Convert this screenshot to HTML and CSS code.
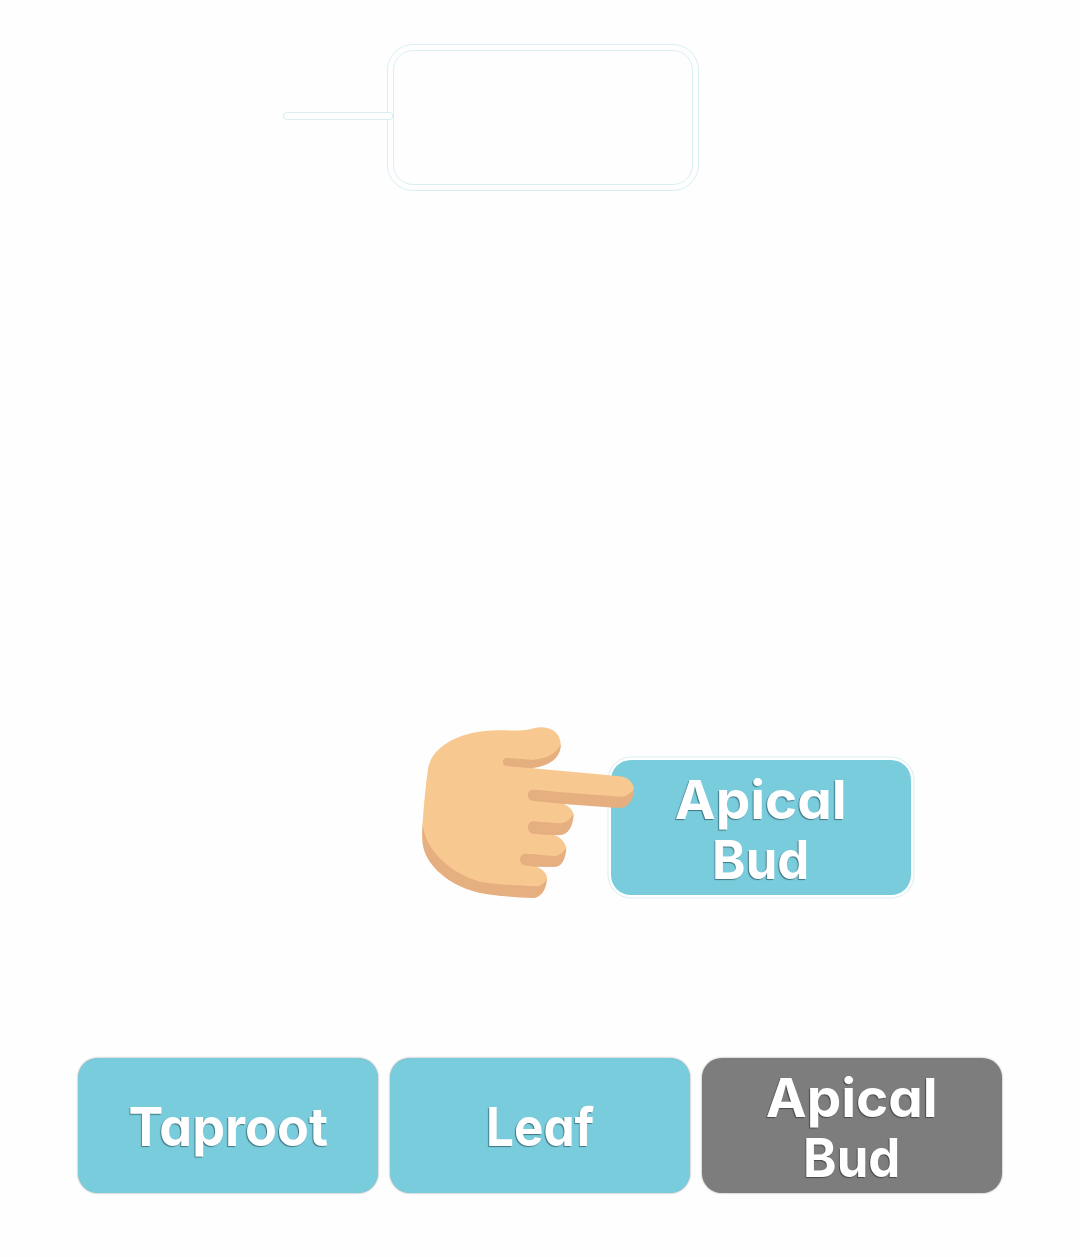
FILE: index.html
```html
<!DOCTYPE html>
<html lang="en">
<head>
<meta charset="utf-8">
<title>Plant parts</title>
<link rel="stylesheet" href="styles.css">
</head>
<body>
<main class="board">
  <section class="target">
    <div class="connector"></div>
    <div class="drop-frame"><div class="drop-slot"></div></div>
  </section>
  <section class="drag">
    <div class="card drag-card"><span class="label apical">Apical</span><span class="label bud">Bud</span></div>
    <svg class="hand" viewBox="0 0 720 585" aria-hidden="true">
      <path fill="#e6af80" d="M38 325C35 350 35 385 43 408C62 465 132 517 207 533C247 541 312 547 368 549C390 550 411 525 411 488L380 455L429 456C453 457 466 437 469 401L431 361L452 360C474 359 490 334 491 297L460 267L624 279C650 281 672 260 672 222L618 220L360 158C405 156 448 133 452 90L440 80L270 130L70 270Z"/>
      <path fill="#f7c88f" d="M53 170C58 100 142 46 265 46C318 47 347 48 372 40C423 27 452 57 452 88C442 115 409 134 367 135L292 130C275 129 274 151 291 153L630 184C652 185 671 204 672 222C657 239 645 247 629 245L370 225C349 223 348 255 368 257L460 267C478 272 490 290 490 298C478 317 464 326 447 325L370 320C349 319 349 355 371 356L431 361C450 363 466 383 469 400C456 416 445 424 432 423L347 417C326 416 324 449 346 451L378 455C395 459 411 475 411 489C402 508 389 516 374 514C318 511 245 507 211 500C127 479 43 407 38 325C40 290 46 218 53 170Z"/>
      <path fill="#e6af80" d="M292 130L367 135C409 134 442 115 452 88C454 131 414 154 366 159L291 153C275 151 275 130 292 130Z"/>
      <path fill="#e6af80" d="M292 129L340 133V156L292 153C275 152 275 130 292 129ZM370 224L420 228V261L368 257C349 255 349 225 370 224ZM370 319L420 323V359L371 356C349 354 349 320 370 319ZM347 416L397 420V454L346 451C326 449 326 417 347 416Z"/>
    </svg>
  </section>
  <section class="tray">
    <div class="card"><span class="label taproot">Taproot</span></div>
    <div class="card"><span class="label leaf">Leaf</span></div>
    <div class="card used"><span class="label apical">Apical</span><span class="label bud">Bud</span></div>
  </section>
</main>
</body>
</html>
```
FILE: styles.css
```css
* { box-sizing: border-box; }
body { margin: 0; background: #fefefe; }
.board {
  width: 1080px;
  height: 1257px;
  padding-top: 44px;
  display: flex;
  flex-direction: column;
  overflow: hidden;
  font-family: "Century Gothic", Inter, sans-serif;
}
.target { display: flex; margin-left: 283px; height: 147px; }
.connector {
  z-index: 1;
  width: 110px;
  height: 8px;
  margin-top: 68px;
  margin-right: -6px;
  border: 1px solid #daeff3;
  border-radius: 4px 3px 3px 4px;
  background: #fefefe;
}
.drop-frame {
  width: 312px;
  height: 147px;
  padding: 5px;
  border: 1px solid #daeff3;
  border-radius: 26px;
}
.drop-slot { height: 135px; border: 1px solid #daeff3; border-radius: 20px; }
.drag { position: relative; margin-top: 569px; padding-left: 611px; }
.hand { position: absolute; left: 410px; top: -45px; width: 240px; height: 195px; }
.card {
  width: 300px;
  height: 135px;
  padding-top: 3px;
  border-radius: 20px;
  background: #79ccdc;
  box-shadow: 0 0 2px rgba(80, 80, 80, .65);
  display: flex;
  flex-direction: column;
  align-items: center;
  justify-content: center;
}
.drag-card { box-shadow: 0 0 0 2.5px #fff, 0 0 0 3.5px #daeff3; padding-top: 5px; }
.used { background: #7d7d7d; padding-top: 5px; }
.tray { display: flex; gap: 12px; margin: 163px 0 0 78px; }
.label {
  color: #fff;
  font-size: 54px;
  font-weight: 700;
  line-height: 60px;
  font-feature-settings: "cv11";
  text-shadow: -1px 1px 1px rgba(30, 60, 70, .6);
  white-space: nowrap;
}
.used .label { text-shadow: -1px 1px 1px rgba(40, 40, 40, .6); }
.apical { transform: scaleX(1.015); }
.bud { transform: scaleX(.94); }
.taproot { transform: scaleX(.965); }
.leaf { transform: scaleX(.915); }
```
